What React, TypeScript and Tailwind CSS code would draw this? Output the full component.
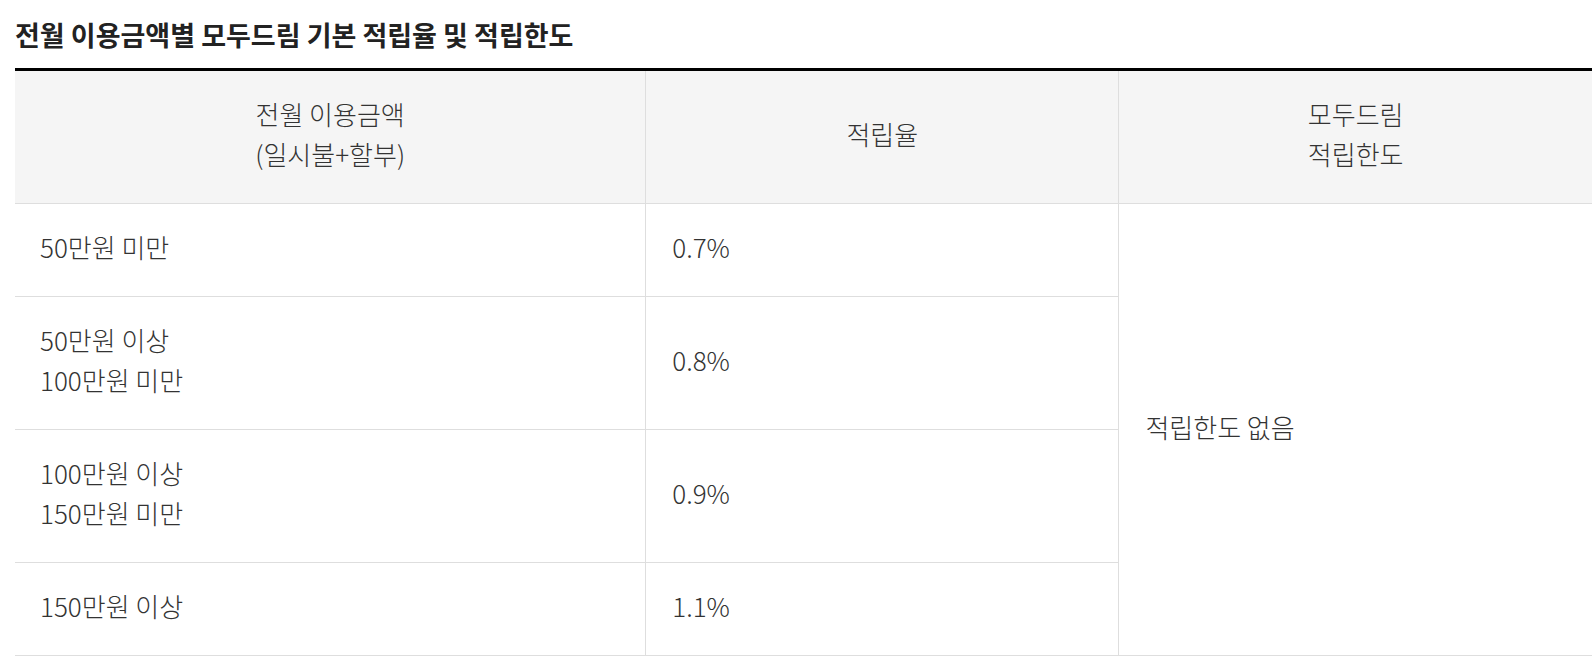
const rows = [
  { range: ['50만원 미만'], rate: '0.7%' },
  { range: ['50만원 이상', '100만원 미만'], rate: '0.8%' },
  { range: ['100만원 이상', '150만원 미만'], rate: '0.9%' },
  { range: ['150만원 이상'], rate: '1.1%' },
];

const font = { fontFamily: '"Noto Sans CJK KR", "Noto Sans", sans-serif' };

export default function App() {
  return (
    <div className="min-h-screen bg-white pl-[15px] pt-[17px]" style={font}>
      <h2 className="text-[27px] font-bold leading-[36px] text-[#222]">
        전월 이용금액별 모두드림 기본 적립율 및 적립한도
      </h2>

      <table className="mt-[15px] w-[1577px] table-fixed border-collapse border-t-[3px] border-black text-[26px] font-light leading-[40px] text-[#333]">
        <colgroup>
          <col className="w-[40%]" />
          <col className="w-[30%]" />
          <col className="w-[30%]" />
        </colgroup>
        <thead>
          <tr className="bg-[#f5f5f5]">
            <th className="border-b border-[#dedede] px-[26px] pt-[23px] pb-[29px] text-center font-light">
              전월 이용금액
              <br />
              (일시불+할부)
            </th>
            <th className="border-b border-l border-[#dedede] px-[26px] pt-[23px] pb-[29px] text-center font-light">
              적립율
            </th>
            <th className="border-b border-l border-[#dedede] px-[26px] pt-[23px] pb-[29px] text-center font-light">
              모두드림
              <br />
              적립한도
            </th>
          </tr>
        </thead>
        <tbody>
          {rows.map((row, i) => (
            <tr key={row.rate}>
              <td className="border-b border-[#dedede] px-[25px] pt-[23px] pb-[29px] align-middle">
                {row.range.map((line, j) => (
                  <div key={j}>{line}</div>
                ))}
              </td>
              <td className="border-b border-l border-[#dedede] px-[26px] pt-[23px] pb-[29px] align-middle">
                {row.rate}
              </td>
              {i === 0 ? (
                <td
                  rowSpan={rows.length}
                  className="border-b border-l border-[#dedede] px-[26px] pt-[23px] pb-[29px] align-middle"
                >
                  적립한도 없음
                </td>
              ) : null}
            </tr>
          ))}
        </tbody>
      </table>
    </div>
  );
}
